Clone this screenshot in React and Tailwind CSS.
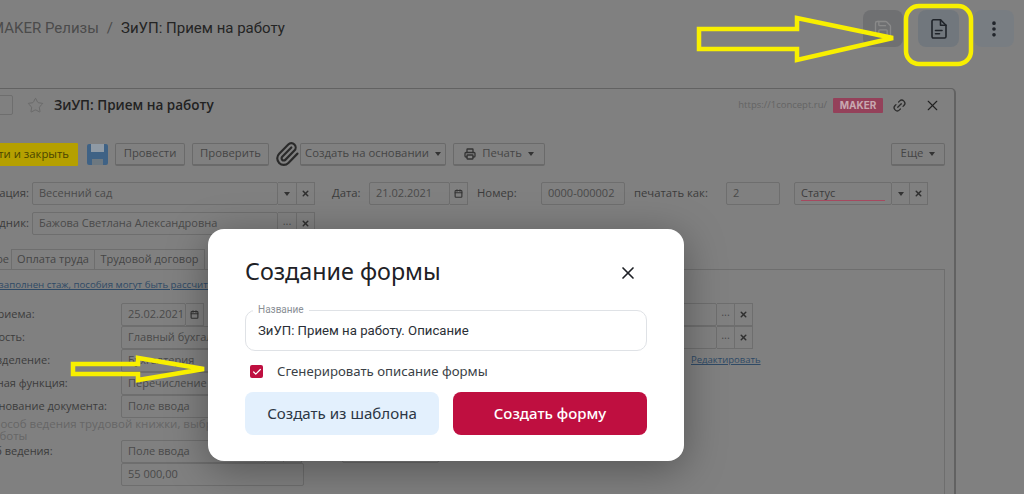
import React from "react";
import { Star, Link2, X, Save, EllipsisVertical, Paperclip, Printer, Calendar, Check } from "lucide-react";

const sans = "font-['Open_Sans',sans-serif]";
const noto = "font-['Noto_Sans',sans-serif]";
const roboto = "font-['Roboto',sans-serif]";

// ---- old form controls (dimmed by the overlay, colours already darkened) ----
const Caret = () => (
  <span className="inline-block border-x-[3px] border-t-[4px] border-x-transparent border-t-[#333]" />
);

const Input = ({ text, className = "" }) => (
  <div className={`h-[23px] flex items-center px-[6px] border border-[#6e6e6e] rounded-[2px] text-[#4a4a4a] text-[11px] whitespace-nowrap overflow-hidden ${className}`}>
    {text}
  </div>
);

const Addon = ({ children, className = "" }) => (
  <div className={`h-[23px] w-[18px] flex items-center justify-center border border-l-0 border-[#6e6e6e] text-[#4a4a4a] text-[11px] ${className}`}>
    {children}
  </div>
);

const Cross = () => <X size={9} strokeWidth={4} className="text-[#2f2f2f]" />;

const Btn = ({ children, className = "" }) => (
  <div className={`h-[23px] flex items-center justify-center gap-[6px] border border-[#6a6a6a] border-b-2 rounded-[2px] text-[#454545] text-[11.3px] whitespace-nowrap ${className}`}>
    {children}
  </div>
);

const Label = ({ text }) => (
  <div className="w-[159px] pl-[1px] text-[#3c3c3c] text-[11px] whitespace-nowrap">{text}</div>
);

const Row = ({ label, children }) => (
  <div className="flex items-center h-[23px]">
    <Label text={label} />
    {children}
  </div>
);

const EndButtons = ({ first = "..." }) => (
  <>
    <Addon className="pb-[4px]">{first}</Addon>
    <Addon>
      <Cross />
    </Addon>
  </>
);

const Form = () => (
  <div className="ml-[-40px] w-[996px] h-[406px] border border-b-0 border-[#626262] border-r-2 rounded-t-[5px] flex flex-col">
    {/* title */}
    <div className="flex items-center h-[20px] mt-[6px] text-[#222]">
      <div className="ml-[30px] w-[22px] h-[20px] border border-[#6e6e6e] rounded-[2px]" />
      <Star size={17} strokeWidth={1.2} className="ml-[14px] text-[#666]" />
      <div className={`ml-[10px] text-[13.5px] font-semibold ${sans}`}>ЗиУП: Прием на работу</div>
      <div className={`ml-auto text-[#646464] text-[9.5px] ${sans}`}>https://1concept.ru/</div>
      <div className="ml-[6px] w-[50px] h-[15px] flex items-center justify-center bg-[#94415a] text-[#c8a8b0] text-[10px] font-bold font-['Inter',sans-serif] rounded-[1px]">
        MAKER
      </div>
      <Link2 size={15} className="ml-[9px] -rotate-45 text-[#2c2c2c]" />
      <X size={17} strokeWidth={1.6} className="ml-[17px] mr-[13px] text-[#222]" />
    </div>

    {/* toolbar */}
    <div className={`flex items-center mt-[26px] ${sans}`}>
      <div className="ml-[3px] w-[114px] h-[23px] flex items-center justify-end pr-[9px] bg-[#b5a000] text-[#4a4500] text-[11.3px] whitespace-nowrap rounded-[1px]">
        Провести и закрыть
      </div>
      <div className="ml-[9px] w-[21px] h-[21px] bg-[#3f6285] rounded-[2px] flex flex-col items-center justify-between">
        <div className="w-[13px] h-[8px] bg-[#8f9aa5]" />
        <div className="w-[11px] h-[6px] bg-[#6d7880]" />
      </div>
      <Btn className="ml-[7px] w-[70px]">Провести</Btn>
      <Btn className="ml-[7px] w-[77px]">Проверить</Btn>
      <Paperclip size={26} strokeWidth={2} className="ml-[5px] text-[#2a2a2a]" />
      <Btn className="w-[146px]">
        Создать на основании <Caret />
      </Btn>
      <Btn className="ml-[7px] w-[92px]">
        <Printer size={12} strokeWidth={2.6} className="text-[#333]" /> Печать <Caret />
      </Btn>
      <Btn className="ml-[346px] w-[54px]">
        Еще <Caret />
      </Btn>
    </div>

    {/* document fields */}
    <div className={`flex items-center mt-[15px] ${sans}`}>
      <div className="w-[68px] flex justify-end text-[#3c3c3c] text-[11.3px] whitespace-nowrap">Организация:</div>
      <Input text="Весенний сад" className="ml-[3px] w-[246px]" />
      <Addon className="w-[19px]">
        <Caret />
      </Addon>
      <Addon>
        <Cross />
      </Addon>
      <div className="ml-[17px] w-[37px] text-[#3c3c3c] text-[11.3px]">Дата:</div>
      <Input text="21.02.2021" className="w-[81px]" />
      <Addon>
        <Calendar size={9} strokeWidth={3} className="text-[#333]" />
      </Addon>
      <div className="ml-[9px] w-[64px] text-[#3c3c3c] text-[11.3px]">Номер:</div>
      <Input text="0000-000002" className="w-[84px]" />
      <div className="ml-[9px] w-[92px] text-[#3c3c3c] text-[11.3px] whitespace-nowrap">печатать как:</div>
      <Input text="2" className="w-[54px]" />
      <div className="ml-[14px] w-[98px] h-[23px] border border-[#6e6e6e] rounded-[2px] px-[6px] flex items-center relative text-[#3c3c3c] text-[11px]">
        Статус
        <div className="absolute left-[6px] right-[6px] bottom-[3px] border-b border-[#a5495f]" />
      </div>
      <Addon>
        <Caret />
      </Addon>
      <Addon>
        <Cross />
      </Addon>
    </div>
    <div className={`flex items-center mt-[7px] ${sans}`}>
      <div className="w-[68px] flex justify-end text-[#3c3c3c] text-[11.3px] whitespace-nowrap">Сотрудник:</div>
      <Input text="Бажова Светлана Александровна" className="ml-[3px] w-[246px]" />
      <Addon className="w-[19px] pb-[4px]">...</Addon>
      <Addon>
        <Cross />
      </Addon>
    </div>

    {/* tabs */}
    <div className={`flex items-end h-[20px] mt-[14px] text-[#454545] text-[11px] ${sans}`}>
      <div className="w-[50px] h-full flex items-center justify-end pr-[2px]">Главное</div>
      <div className="w-[84px] h-full flex items-center justify-center border border-[#6e6e6e] border-b-0">Оплата труда</div>
      <div className="w-[110px] h-full flex items-center justify-center border-r border-t border-[#6e6e6e]">Трудовой договор</div>
    </div>

    {/* tab body */}
    <div className={`w-[984px] flex-1 border border-b-0 border-[#6e6e6e] ${sans}`}>
      <div className="h-[14px] mt-[8px] pl-[22px] text-[#2f4a66] text-[9.7px] underline whitespace-nowrap">
        Не заполнен стаж, пособия могут быть рассчитаны неверно
      </div>
      <div className="flex flex-col mt-[11px]">
        <Row label="Дата приема:">
          <Input text="25.02.2021" className="w-[65px] text-[11.5px]" />
          <Addon>
            <Calendar size={9} strokeWidth={3} className="text-[#333]" />
          </Addon>
          <Input text="" className="ml-[397px] w-[116px]" />
          <EndButtons />
        </Row>
        <Row label="Должность:">
          <Input text="Главный бухгалтер" className="w-[220px] text-[11.5px]" />
          <Input text="" className="ml-[260px] w-[116px]" />
          <EndButtons />
        </Row>
        <Row label="Подразделение:">
          <Input text="Бухгалтерия" className="w-[220px] text-[11.5px]" />
          <div className="ml-[350px] text-[#2f4a66] text-[9.5px] underline">Редактировать</div>
        </Row>
        <Row label="Основная функция:">
          <Input text="Перечисление" className="w-[220px] text-[11.5px]" />
        </Row>
        <Row label="Наименование документа:">
          <Input text="Поле ввода" className="w-[220px] text-[11.5px]" />
        </Row>
        <div className="h-[22px] pl-[24px] text-[#666] text-[11.5px] leading-[12px] whitespace-nowrap">
          Способ ведения трудовой книжки, выбранный для
          <br />
          работы
        </div>
        <Row label="Способ ведения:">
          <Input text="Поле ввода" className="w-[145px] text-[11.5px]" />
          <EndButtons />
          <Input text="" className="ml-[40px] w-[97px]" />
        </Row>
        <Row label="">
          <Input text="55 000,00" className="w-[183px] text-[11.5px]" />
        </Row>
      </div>
    </div>
  </div>
);

// ---- create form dialog ----
const Dialog = () => (
  <div className={`absolute left-[208px] top-[229px] w-[476px] h-[232px] bg-white rounded-[16px] shadow-[0_8px_40px_rgba(0,0,0,0.35)] px-[37px] pt-[25px] ${noto}`}>
    <div className="flex items-center justify-between h-[36px]">
      <div className="text-[23.3px] leading-[32px] mt-[-2px] text-[#1e2126]">Создание формы</div>
      <X size={20} strokeWidth={2} className="mr-[9px] mt-[2px] text-[#1e2126]" />
    </div>
    <div className="relative mt-[20px] h-[41px] flex items-center px-[12px] border border-[#dfe2e6] rounded-[10px] text-[13.2px] text-[#2b2f36]">
      <span className={roboto}>ЗиУП: Прием на работу. Описание</span>
      <span className={`absolute left-[7px] top-[-7px] bg-white px-[5px] text-[10px] leading-[12px] text-[#8a8f96] ${roboto}`}>
        Название
      </span>
    </div>
    <div className="flex items-center mt-[14px] ml-[5px] h-[13px]">
      <div className="w-[13px] h-[13px] bg-[#bf0f40] rounded-[2px] flex items-center justify-center">
        <Check size={10} strokeWidth={3} className="text-white" />
      </div>
      <div className="ml-[14px] text-[13.2px] text-[#3a3f46] whitespace-nowrap">Сгенерировать описание формы</div>
    </div>
    <div className="flex justify-between mt-[14px]">
      <div className="w-[194px] h-[43px] flex items-center justify-center bg-[#e3f0fd] rounded-[8px] text-[15.1px] text-[#2c3644]">
        Создать из шаблона
      </div>
      <div className="w-[194px] h-[43px] flex items-center justify-center bg-[#bf0f40] rounded-[8px] text-[15px] font-medium text-white">
        Создать форму
      </div>
    </div>
  </div>
);

// ---- yellow hand-drawn annotations ----
const Annotations = () => (
  <svg className="absolute inset-0 pointer-events-none" width="1024" height="494" fill="none" stroke="#f8ef00" strokeWidth="4.5">
    <polygon points="699,29 797,29 797,18 893,38 797,60 797,49 699,49" />
    <rect x="906" y="6" width="65" height="58" rx="13" />
    <polygon points="73,364 138,364 138,358 204,369 138,380 138,374 73,374" />
  </svg>
);

export default function App() {
  return (
    <div className={`relative w-[1024px] h-[494px] overflow-hidden bg-[#808080] ${sans}`}>
      {/* top bar */}
      <div className="h-[88px] flex items-start">
        <div className={`ml-[-9px] mt-[17px] flex gap-[8px] text-[15px] whitespace-nowrap ${roboto}`}>
          <span className="text-[#4b4b4b]">MAKER Релизы</span>
          <span className="text-[#4b4b4b]">/</span>
          <span className="text-[#242424]">ЗиУП: Прием на работу</span>
        </div>
        <div className="ml-auto mr-[10px] mt-[10px] flex gap-[15px]">
          <div className="w-[40px] h-[37px] rounded-[8px] bg-[#6f7072] flex items-center justify-center">
            <Save size={20} strokeWidth={1.6} className="text-[#8a8a8a]" />
          </div>
          <div className="w-[41px] h-[37px] rounded-[8px] bg-[#71777d] flex items-center justify-center">
            <svg width="20" height="22" viewBox="0 0 20 22" fill="none" stroke="#20242a" strokeWidth="1.6" strokeLinejoin="round" strokeLinecap="round">
              <path d="M3 3.2A1.4 1.4 0 0 1 4.4 1.8H11.5L17 7.3V18.6A1.4 1.4 0 0 1 15.6 20H4.4A1.4 1.4 0 0 1 3 18.6Z" />
              <path d="M11.5 1.8V7.3H17" />
              <path d="M6.5 12.5H13" />
              <path d="M6.5 15.8H10.5" />
            </svg>
          </div>
          <div className="w-[40px] h-[37px] rounded-[8px] bg-[#787d82] flex items-center justify-center">
            <EllipsisVertical size={20} strokeWidth={2.4} className="text-[#20242a]" />
          </div>
        </div>
      </div>

      <Form />
      <Dialog />
      <Annotations />
    </div>
  );
}
